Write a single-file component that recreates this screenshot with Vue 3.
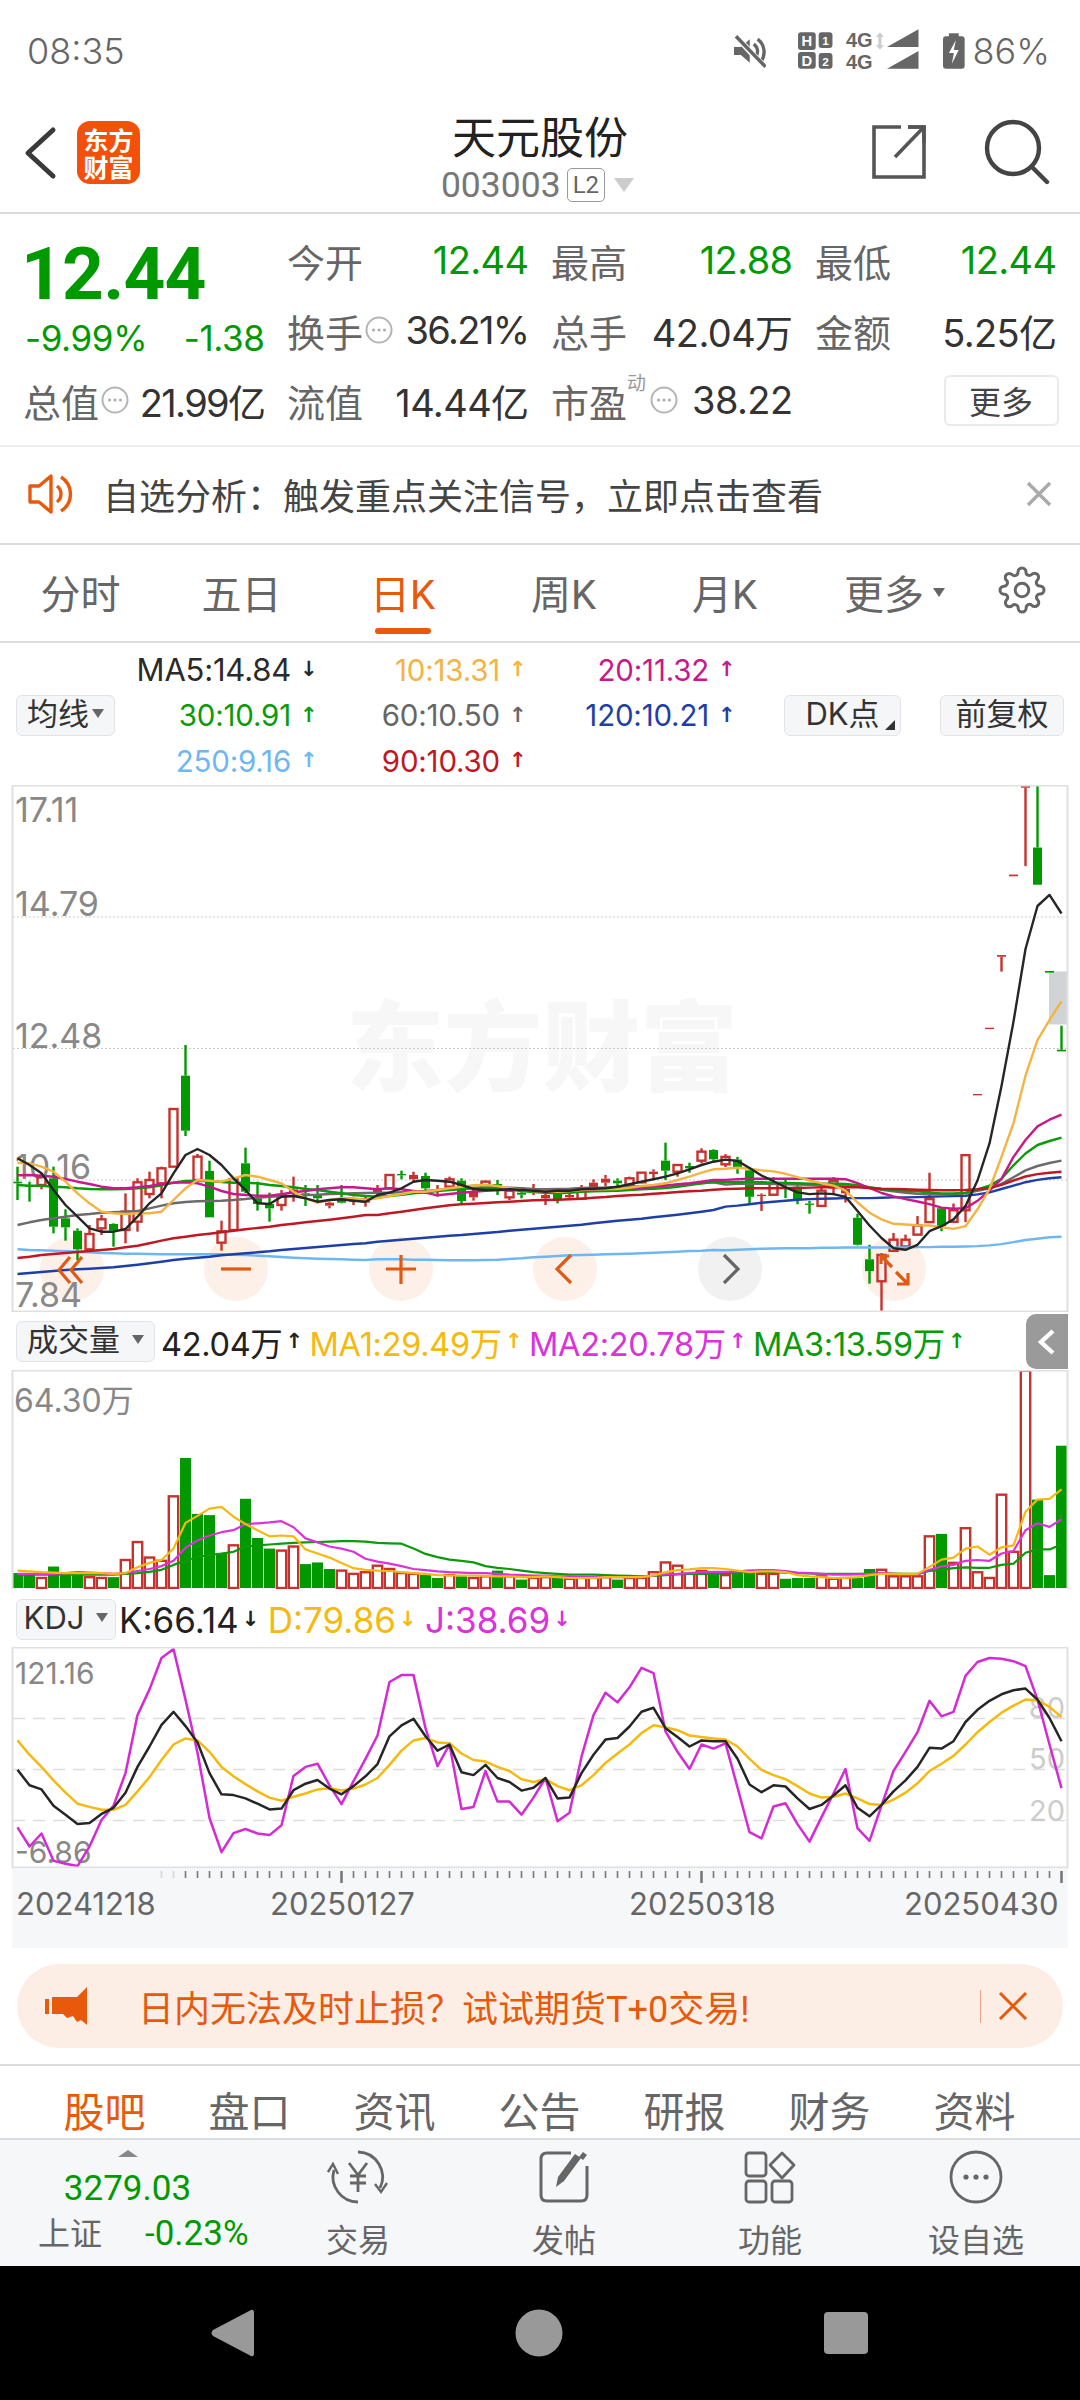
<script setup>
const cx = (i) => 17.5 + 12 * i
const conv = (list, base, scale) => list.map((v) => base + v / scale)
const rows = (list, base, scale) => list.map(([k, a, b, c, d]) => [k, base + a / scale, base + b / scale, base + c / scale, base + d / scale])

const candleData = [
  ...rows([
    ['g',410,455,460,510],['g',455,465,470,515],['r',430,440,465,478],['g',410,445,590,610],['g',538,565,592,632],
    ['g',595,602,658,690],['r',585,612,658,660],['r',555,568,595,615],['g',580,582,602,650],['r',490,545,600,640],
    ['r',445,457,575,605],['r',425,450,492,505],['r',410,415,460,505],['r',237,237,410,410],['g',45,137,302,318],
    ['r',372,380,450,450],['g',392,423,562,562],['r',572,604,638,662],['r',445,447,600,600],['g',353,400,485,490],
    ['g',455,505,522,542],['g',488,522,535,575],['r',480,495,525,542],['r',440,478,492,515],['g',465,490,495,528],
    ['g',465,495,505,520],['r',515,518,527,535],['g',465,510,518,520],['r',500,505,515,525],['r',500,505,518,530]
  ], 1030, 3),
  ...rows([
    ['r',195,205,222,225],['r',162,165,205,205],['g',152,162,166,178],['r',155,165,178,185],['g',158,168,205,215],
    ['r',195,210,215,230],['r',170,178,200,205],['g',175,182,243,250],['r',210,215,232,242],['r',182,185,205,210],
    ['g',180,192,210,225],['r',205,212,232,240],['g',210,218,224,235],['r',192,205,212,225],['r',215,225,235,255],
    ['g',210,220,240,250],['r',210,225,232,235],['r',195,205,236,238],['r',178,188,202,205],['r',165,176,188,200],
    ['g',175,182,190,200],['r',170,175,195,200],['r',158,158,187,190],['r',148,155,162,180],['g',68,122,152,180],
    ['r',132,135,155,170],['g',128,138,145,158],['r',85,95,122,130],['g',88,90,118,125]
  ], 1120, 3),
  ...rows([
    ['r',1092,1100,1122,1130],['g',1100,1108,1135,1150],['g',1130,1140,1218,1240],['r',1208,1212,1216,1260],['r',1160,1180,1212,1212],
    ['g',1168,1190,1195,1222],['g',1180,1188,1228,1240],['g',1230,1238,1242,1268],['r',1190,1200,1245,1245],['r',1160,1172,1190,1210],
    ['r',1190,1195,1208,1235],['g',1268,1280,1360,1362],['g',1360,1403,1438,1475],['r',1385,1390,1468,1558],['r',1325,1345,1378,1380],
    ['r',1330,1345,1365,1368],['r',1275,1303,1330,1330],['r',1147,1225,1293,1293],['g',1250,1252,1305,1320],['r',1238,1258,1292,1295],
    ['r',1095,1095,1258,1293],['r',914,914,918,918],['r',718,718,722,722],['r',503,503,508,552],['r',265,265,270,270],
    ['r',3,3,8,240],['g',0,185,295,295],['g',550,550,555,555],['g',712,783,788,788]
  ], 785, 2.958)
]

const candles = candleData.map(([k, hi, top, bot, lo], i) => ({
  i, x: cx(i), cls: k === 'r' ? 'up' : 'down', hi, top, bot, lo,
  solid: k === 'g' || bot - top < 6
}))

const lineSet = (a, b, c) => [...conv(a, 1030, 3), ...conv(b, 1120, 3), ...conv(c, 785, 2.958)]
const toPath = (ys) => ys.map((y, i) => `${cx(i).toFixed(1)},${y.toFixed(1)}`).join(' ')

const mainLines = [
  { c: '#6fb7f2', y: lineSet(
    [658,660,661,662,664,665,667,669,670,671,671,672,673,673,673,673,673,673,674,675,677,679,681,683,685,686,687,688,689,690],
    [418,418,418,419,419,420,421,421,421,420,419,417,415,412,410,408,406,405,404,403,402,401,400,398,397,395,393,392,390],
    [1376,1375,1373,1372,1371,1370,1370,1370,1369,1369,1368,1368,1368,1368,1368,1368,1367,1367,1366,1366,1365,1364,1362,1358,1352,1346,1342,1338,1336]) },
  { c: '#1f3fa8', y: lineSet(
    [732,729,726,723,720,718,716,714,712,708,704,700,695,690,686,683,680,676,673,670,667,664,660,657,654,651,648,645,642,640],
    [365,362,359,356,353,350,347,345,342,339,336,332,329,326,323,320,317,314,310,306,302,299,296,292,288,284,280,275,270],
    [1247,1244,1240,1236,1233,1230,1227,1225,1224,1223,1222,1222,1222,1221,1220,1220,1219,1218,1217,1216,1215,1211,1205,1195,1185,1175,1168,1163,1160]) },
  { c: '#6b6b6b', y: lineSet(
    [585,577,570,565,560,555,552,548,547,545,543,535,527,520,516,514,513,512,510,507,503,500,498,497,495,494,492,491,490,489],
    [218,218,217,215,213,210,208,206,204,202,202,203,205,207,208,207,206,204,203,203,202,200,199,198,196,195,193,190,187],
    [1182,1180,1180,1180,1180,1181,1182,1183,1183,1183,1184,1187,1192,1197,1202,1206,1209,1210,1210,1210,1207,1200,1193,1180,1160,1140,1127,1118,1111]) },
  { c: '#0a9a0a', y: lineSet(
    [465,467,467,470,472,475,477,478,478,477,475,472,466,458,453,452,453,456,458,458,460,465,468,472,477,480,485,490,495,498],
    [230,228,224,220,217,213,210,207,204,203,204,208,213,216,218,220,218,215,214,213,212,210,208,206,204,200,195,190,185],
    [1175,1175,1174,1175,1176,1177,1178,1179,1179,1179,1180,1184,1190,1195,1198,1200,1202,1205,1208,1208,1207,1196,1185,1165,1125,1090,1065,1053,1043]) },
  { c: '#c8198c', y: lineSet(
    [436,435,437,440,447,455,462,470,475,475,472,468,462,458,457,460,470,483,492,495,497,497,493,487,483,478,475,472,472,475],
    [208,205,208,213,218,226,222,218,215,212,210,210,210,212,215,212,212,210,208,206,205,205,203,200,197,193,190,185,180],
    [1168,1166,1165,1165,1165,1165,1165,1165,1165,1165,1166,1178,1192,1207,1217,1225,1232,1240,1250,1253,1252,1230,1200,1165,1100,1050,1010,990,975]) },
  { c: '#c01822', y: lineSet(
    [684,680,675,672,669,666,663,660,657,652,647,640,632,625,620,615,611,607,602,598,594,590,585,581,577,573,569,565,560,555],
    [285,280,275,270,265,260,256,253,251,249,247,245,243,241,240,239,238,236,233,231,228,226,224,221,219,216,214,212,209],
    [1195,1194,1193,1193,1193,1192,1192,1191,1190,1190,1190,1190,1192,1194,1195,1196,1197,1198,1199,1199,1198,1196,1192,1183,1170,1158,1151,1147,1144]) },
  { c: '#f5b342', y: lineSet(
    [398,400,410,425,455,490,520,545,550,552,550,550,545,510,475,450,452,455,445,435,440,450,460,485,505,518,510,505,505,510],
    [235,228,222,215,215,210,205,200,196,195,198,205,210,213,215,215,213,210,208,208,207,203,198,195,190,180,170,158,148],
    [1135,1132,1135,1140,1143,1150,1160,1170,1178,1185,1200,1235,1265,1285,1298,1300,1302,1303,1308,1313,1305,1255,1195,1100,1000,860,755,695,640]) },
  { c: '#262626', y: lineSet(
    [385,405,430,480,525,560,595,605,605,597,560,520,490,430,375,357,375,405,445,480,520,522,500,498,505,515,510,508,512,515],
    [225,218,205,185,180,182,185,195,207,210,210,208,210,212,215,212,212,208,206,205,200,193,185,178,170,160,148,135,125],
    [1108,1112,1133,1155,1172,1190,1205,1210,1208,1210,1218,1260,1303,1340,1370,1375,1360,1320,1305,1285,1245,1170,1060,890,700,485,358,325,380]) }
]
const mainPaths = mainLines.map((l) => ({ c: l.c, pts: toPath(l.y) }))

const circleXs = [
  { x: 72, gray: false }, { x: 236, gray: false }, { x: 401, gray: false },
  { x: 565, gray: false }, { x: 730, gray: true }, { x: 894, gray: false }
]
const priceLabels = [
  { t: '17.11', y: 822 }, { t: '14.79', y: 916 }, { t: '12.48', y: 1048 }, { t: '10.16', y: 1179 }, { t: '7.84', y: 1307 }
]
const gridYs = [917, 1048.5, 1180]

const volSpec = 'g620 g620 r632 g604 g620 g622 r630 r632 g630 r588 r544 r582 r590 r432 g338 g475 g478 g572 r552 g438 g534 g560 r565 r555 g598 g594 g610 r614 r622 r618 r602 r610 r620 r622 g624 g632 r625 g628 r632 r628 g614 r628 g636 r632 r630 g632 r634 r632 r632 r630 g636 r632 r632 r618 r594 r602 r622 r615 g620 r625 g620 g612 r622 r622 g634 g632 g632 r628 r634 r632 g632 g610 r612 r628 r628 r628 r530 g524 r595 r510 r618 r632 r428 r568 r124 g440 g625 g308'
const volBars = volSpec.split(' ').map((s, i) => {
  const top = 1320 + Number(s.slice(1)) / 2.45
  return { i, x: cx(i), up: s[0] === 'r', top, h: 1588 - top }
})
const vol = (list) => toPath(list.map((v) => 1320 + v / 2.45))
const volLines = [
  { c: '#0a9a0a', pts: vol([624,624,624,624,624,624,624,624,624,622,620,617,612,600,590,580,576,572,568,555,552,550,548,546,545,544,543,542,542,543,546,547,548,560,573,581,587,590,594,603,607,610,614,618,620,622,624,624,624,625,626,627,628,627,625,623,622,622,622,620,619,618,618,618,619,620,621,622,622,622,622,621,620,621,622,622,615,612,608,606,607,607,600,597,570,562,562,550]) },
  { c: '#d933d9', pts: vol([622,622,622,622,620,618,619,620,622,620,615,610,603,590,558,540,528,520,515,500,498,496,493,508,535,545,555,560,568,585,592,597,603,610,613,616,618,619,620,620,622,624,625,626,626,628,628,630,630,630,630,630,629,626,623,622,620,618,617,617,616,614,613,613,615,619,620,622,624,624,623,622,620,622,624,624,612,604,600,590,588,590,572,566,515,498,507,488]) },
  { c: '#f5b90f', pts: vol([614,616,618,619,620,620,620,620,622,620,606,595,588,560,497,480,462,458,482,500,515,530,528,530,562,572,582,595,608,612,614,615,618,620,622,625,626,626,626,627,628,628,630,630,628,630,632,632,632,630,630,630,630,626,618,613,611,608,608,610,614,618,616,616,618,625,628,630,632,632,630,625,622,622,622,622,605,587,582,560,555,575,557,552,470,440,438,415]) }
]

const kdjLines = [
  { c: '#d42bd4', pts: vol([1243,1290,1258,1325,1332,1338,1290,1225,1190,1110,968,905,828,806,930,1060,1220,1304,1257,1247,1258,1262,1238,1117,1095,1087,1140,1186,1130,1075,1018,887,870,870,1000,1093,1040,1198,1193,1105,1180,1180,1212,1170,1122,1228,1207,1070,968,913,937,900,852,865,1008,1058,1100,1040,1050,1037,1145,1255,1270,1192,1184,1235,1278,1218,1160,1100,1245,1276,1190,1105,1058,1010,933,971,960,872,838,828,830,836,848,930,1040,1147]) },
  { c: '#f5b90f', pts: vol([1030,1065,1095,1128,1158,1185,1193,1200,1200,1188,1155,1120,1078,1040,1025,1030,1058,1095,1118,1137,1155,1170,1178,1168,1160,1150,1147,1153,1148,1138,1122,1090,1055,1030,1024,1035,1037,1062,1078,1082,1095,1105,1125,1132,1125,1142,1152,1140,1115,1085,1062,1040,1012,993,998,1005,1018,1022,1025,1028,1045,1075,1102,1115,1125,1142,1160,1170,1168,1160,1172,1186,1188,1175,1158,1135,1105,1087,1068,1040,1010,985,962,945,930,932,948,973]) },
  { c: '#262626', pts: vol([1102,1140,1150,1190,1212,1235,1232,1210,1195,1158,1095,1045,992,960,995,1035,1110,1162,1164,1172,1185,1199,1197,1152,1136,1127,1148,1162,1142,1118,1088,1020,993,977,1020,1055,1040,1108,1115,1090,1122,1132,1153,1146,1122,1172,1170,1110,1065,1028,1024,996,960,950,1000,1022,1045,1030,1032,1032,1075,1138,1157,1140,1143,1172,1198,1188,1165,1140,1195,1216,1188,1155,1128,1095,1048,1050,1032,985,955,933,917,907,903,930,975,1032]) }
]
const kdjDash = [1718.5, 1769.5, 1820.5]
const kdjRight = [{ t: '80', y: 1718 }, { t: '50', y: 1769 }, { t: '20', y: 1821 }]

const ticks = Array.from({ length: 76 }, (_, n) => {
  const i = n + 12
  return { i, x: cx(i), major: i === 27 || i === 57 || i === 87, faded: i < 14 }
})
const axisLabels = [
  { t: '20241218', x: 16 }, { t: '20250127', x: 270 }, { t: '20250318', x: 629 }, { t: '20250430', x: 904 }
]

const quoteRows = [
  [{ l: '今开', v: '12.44', green: true }, { l: '最高', v: '12.88', green: true }, { l: '最低', v: '12.44', green: true }],
  [{ l: '换手', v: '36.21%', dots: true, tight: true }, { l: '总手', v: '42.04万' }, { l: '金额', v: '5.25亿' }]
]

const legend = [
  { t: 'MA5:14.84', a: '↓', c: '#2a2a2a', col: 2, row: 1, big: true },
  { t: '10:13.31', a: '↑', c: '#f5b342', col: 3, row: 1 },
  { t: '20:11.32', a: '↑', c: '#c8198c', col: 4, row: 1 },
  { t: '30:10.91', a: '↑', c: '#0a9a0a', col: 2, row: 2 },
  { t: '60:10.50', a: '↑', c: '#666666', col: 3, row: 2 },
  { t: '120:10.21', a: '↑', c: '#1f3fa8', col: 4, row: 2 },
  { t: '250:9.16', a: '↑', c: '#6fb7f2', col: 2, row: 3 },
  { t: '90:10.30', a: '↑', c: '#c01822', col: 3, row: 3 }
]

const volLegend = [
  { t: '42.04万', a: '↑', c: '#222222' },
  { t: 'MA1:29.49万', a: '↑', c: '#f5b90f' },
  { t: 'MA2:20.78万', a: '↑', c: '#d933d9' },
  { t: 'MA3:13.59万', a: '↑', c: '#0a9a0a' }
]
const kdjLegend = [
  { t: 'K:66.14', a: '↓', c: '#222222' },
  { t: 'D:79.86', a: '↓', c: '#f5b90f' },
  { t: 'J:38.69', a: '↓', c: '#d933d9' }
]

const periodTabs = ['分时', '五日', '日K', '周K', '月K']
const infoTabs = ['股吧', '盘口', '资讯', '公告', '研报', '财务', '资料']
</script>

<template>
  <div class="phone">
    <div class="status">
      <span class="time">08:35</span>
      <div class="status-right">
        <svg width="34" height="36" viewBox="0 0 34 36" class="si-mute">
          <path d="M1 14 h7 l9 -8 v24 l-9 -8 h-7 z" fill="#666" />
          <path d="M21 11 a9 9 0 0 1 2 13 M25 6 a16 16 0 0 1 3 23" fill="none" stroke="#666" stroke-width="3.4" />
          <path d="M2 2 L32 34" stroke="#fff" stroke-width="6" />
          <path d="M3 3 L33 34" stroke="#666" stroke-width="3.6" />
        </svg>
        <svg width="36" height="38" viewBox="0 0 36 38" class="si-hd">
          <rect x="0" y="0" width="18" height="18" rx="3" fill="#666" />
          <rect x="21" y="0" width="14" height="16" rx="3" fill="#666" />
          <rect x="0" y="20" width="18" height="17" rx="3" fill="#666" />
          <rect x="21" y="21" width="14" height="16" rx="3" fill="#666" />
          <text x="9" y="14" class="si-t" font-size="15">H</text>
          <text x="28" y="13" class="si-t" font-size="12">1</text>
          <text x="9" y="34" class="si-t" font-size="15">D</text>
          <text x="28" y="34" class="si-t" font-size="12">2</text>
        </svg>
        <div class="net">
          <span>4G</span>
          <span>4G</span>
        </div>
        <svg width="12" height="18" viewBox="0 0 12 18" class="si-updown">
          <path d="M6 0 L10 5 H2 Z M6 18 L10 13 H2 Z" fill="#ccc" />
          <rect x="4.5" y="4" width="3" height="10" fill="#ccc" />
        </svg>
        <svg width="32" height="41" viewBox="0 0 32 41" class="si-signal">
          <path d="M32 0 V18 H0 Z M32 22 V40 H0 Z" fill="#666" />
        </svg>
        <svg width="22" height="36" viewBox="0 0 22 36" class="si-batt">
          <rect x="6" y="0" width="10" height="4" fill="#666" />
          <rect x="0" y="3" width="22" height="33" rx="3" fill="#666" />
          <path d="M13 7 L6 20 H11 L9 31 L16 17 H11 Z" fill="#fff" />
        </svg>
        <span class="pct">86%</span>
      </div>
    </div>

    <header class="head">
      <div class="head-left">
        <svg width="34" height="54" viewBox="0 0 34 54" class="back">
          <path d="M30 4 L5 27 L30 50" fill="none" stroke="#3a3a3a" stroke-width="5" stroke-linecap="round" stroke-linejoin="round" />
        </svg>
        <div class="logo"><span>东方</span><span>财富</span></div>
      </div>
      <div class="head-mid">
        <div class="title">天元股份</div>
        <div class="code">
          <span>003003</span><span class="l2">L2</span><i class="down-tri"></i>
        </div>
      </div>
      <div class="head-right">
        <svg width="56" height="56" viewBox="0 0 56 56">
          <path d="M30 3 H3 V53 H53 V3 H37" fill="none" stroke="#555" stroke-width="3.6" />
          <path d="M24 33 L52 4 M37 3 H53 V19" fill="none" stroke="#555" stroke-width="3.6" />
        </svg>
        <svg width="66" height="66" viewBox="0 0 66 66">
          <circle cx="29" cy="29" r="26" fill="none" stroke="#444" stroke-width="4.4" />
          <path d="M48 48 L63 63" stroke="#444" stroke-width="4.4" stroke-linecap="round" />
        </svg>
      </div>
    </header>

    <section class="quote">
      <div class="q-price">12.44</div>
      <template v-for="c in quoteRows[0]" :key="c.l">
        <div class="q-cell"><span class="q-l">{{ c.l }}</span><span class="q-v" :class="{ green: c.green }">{{ c.v }}</span></div>
      </template>
      <div class="q-change"><span>-9.99%</span><span>-1.38</span></div>
      <template v-for="c in quoteRows[1]" :key="c.l">
        <div class="q-cell">
          <span class="q-l">{{ c.l }}<svg v-if="c.dots" class="dots" width="28" height="28" viewBox="0 0 28 28"><circle cx="14" cy="14" r="12.5" fill="none" stroke="#b5b5b5" stroke-width="2" /><circle cx="8.5" cy="14" r="1.5" fill="#aaa" /><circle cx="14" cy="14" r="1.5" fill="#aaa" /><circle cx="19.5" cy="14" r="1.5" fill="#aaa" /></svg></span>
          <span class="q-v" :class="{ 'q-tight': c.tight }">{{ c.v }}</span>
        </div>
      </template>
      <div class="q-cell">
        <span class="q-l">总值<svg class="dots" width="28" height="28" viewBox="0 0 28 28"><circle cx="14" cy="14" r="12.5" fill="none" stroke="#b5b5b5" stroke-width="2" /><circle cx="8.5" cy="14" r="1.5" fill="#aaa" /><circle cx="14" cy="14" r="1.5" fill="#aaa" /><circle cx="19.5" cy="14" r="1.5" fill="#aaa" /></svg></span>
        <span class="q-v q-tight">21.99亿</span>
      </div>
      <div class="q-cell"><span class="q-l">流值</span><span class="q-v">14.44亿</span></div>
      <div class="q-cell">
        <span class="q-l q-pe">市盈<sup>动</sup><svg class="dots" width="28" height="28" viewBox="0 0 28 28"><circle cx="14" cy="14" r="12.5" fill="none" stroke="#b5b5b5" stroke-width="2" /><circle cx="8.5" cy="14" r="1.5" fill="#aaa" /><circle cx="14" cy="14" r="1.5" fill="#aaa" /><circle cx="19.5" cy="14" r="1.5" fill="#aaa" /></svg></span>
        <span class="q-v">38.22</span>
      </div>
      <div class="q-more"><button class="more-btn">更多</button></div>
    </section>

    <div class="notice">
      <svg width="48" height="42" viewBox="0 0 48 42">
        <path d="M2 13 H11 L23 3 V39 L11 29 H2 Z" fill="none" stroke="#e8590c" stroke-width="3.4" stroke-linejoin="round" />
        <path d="M29 13 a10 10 0 0 1 0 16" fill="none" stroke="#e8590c" stroke-width="3.4" />
        <path d="M33 4 a20 20 0 0 1 0 34" fill="none" stroke="#e8590c" stroke-width="3.4" />
      </svg>
      <span class="notice-t">自选分析：触发重点关注信号，立即点击查看</span>
      <svg class="notice-x" width="26" height="26" viewBox="0 0 26 26">
        <path d="M2 2 L24 24 M24 2 L2 24" stroke="#aaa" stroke-width="3.4" />
      </svg>
    </div>

    <nav class="periods">
      <div v-for="(t, n) in periodTabs" :key="t" class="period" :class="{ on: n === 2 }">{{ t }}</div>
      <div class="period more-tab">更多<i class="tri-more"></i></div>
      <svg class="gear" width="48" height="48" viewBox="0 0 24 24">
        <circle cx="12" cy="12" r="3.4" fill="none" stroke="#666" stroke-width="1.5" />
        <path d="M19.4 15a1.65 1.65 0 0 0 .33 1.82l.06.06a2 2 0 0 1 0 2.83 2 2 0 0 1-2.83 0l-.06-.06a1.65 1.65 0 0 0-1.82-.33 1.65 1.65 0 0 0-1 1.51V21a2 2 0 0 1-2 2 2 2 0 0 1-2-2v-.09A1.65 1.65 0 0 0 9 19.4a1.65 1.65 0 0 0-1.82.33l-.06.06a2 2 0 0 1-2.83 0 2 2 0 0 1 0-2.83l.06-.06a1.65 1.65 0 0 0 .33-1.82 1.65 1.65 0 0 0-1.51-1H3a2 2 0 0 1-2-2 2 2 0 0 1 2-2h.09A1.65 1.65 0 0 0 4.6 9a1.65 1.65 0 0 0-.33-1.82l-.06-.06a2 2 0 0 1 0-2.83 2 2 0 0 1 2.83 0l.06.06a1.65 1.65 0 0 0 1.82.33H9a1.65 1.65 0 0 0 1-1.51V3a2 2 0 0 1 2-2 2 2 0 0 1 2 2v.09a1.65 1.65 0 0 0 1 1.51 1.65 1.65 0 0 0 1.82-.33l.06-.06a2 2 0 0 1 2.83 0 2 2 0 0 1 0 2.83l-.06.06a1.65 1.65 0 0 0-.33 1.82V9a1.65 1.65 0 0 0 1.51 1H21a2 2 0 0 1 2 2 2 2 0 0 1-2 2h-.09a1.65 1.65 0 0 0-1.51 1z" fill="none" stroke="#666" stroke-width="1.5" stroke-linejoin="round" />
      </svg>
    </nav>

    <div class="legend">
      <div class="leg-btn ma-btn">均线<i class="tri-btn"></i></div>
      <div
        v-for="m in legend" :key="m.t" class="leg-item" :class="{ big: m.big }"
        :style="{ color: m.c, gridColumn: m.col, gridRow: m.row }"
      ><span>{{ m.t }}</span><span class="arrow">{{ m.a }}</span></div>
      <div class="leg-btn dk-btn">DK点<i class="corner"></i></div>
      <div class="leg-btn fq-btn">前复权</div>
    </div>

    <svg class="panel main" width="1080" height="527" viewBox="0 785 1080 527">
      <defs>
        <clipPath id="mainClip"><rect x="12" y="785" width="1056" height="527" /></clipPath>
      </defs>
      <text x="346" y="1083" class="watermark">东方财富</text>
      <line v-for="y in gridYs" :key="y" x1="13" x2="1067" :y1="y" :y2="y" class="grid-dot" />
      <circle v-for="c in circleXs" :key="c.x" :cx="c.x" cy="1269" r="32" :fill="c.gray ? '#f1f1f1' : '#fdf0e9'" />
      <text v-for="l in priceLabels" :key="l.t" x="15" :y="l.y" class="axis-t">{{ l.t }}</text>
      <rect x="1049" y="971.5" width="18" height="53" fill="#d1d4d7" />
      <g clip-path="url(#mainClip)">
        <g v-for="k in candles" :key="k.i" :class="k.cls">
          <line :x1="k.x" :x2="k.x" :y1="k.hi" :y2="k.top" class="wick" />
          <line :x1="k.x" :x2="k.x" :y1="k.bot" :y2="k.lo" class="wick" />
          <rect v-if="k.solid" :x="k.x - 4.5" :y="k.top" width="9" :height="k.bot - k.top" class="solid" />
          <rect v-else :x="k.x - 4" :y="k.top" width="8" :height="k.bot - k.top" class="hollow" />
        </g>
        <polyline v-for="l in mainPaths" :key="l.c" :points="l.pts" fill="none" :stroke="l.c" stroke-width="2.4" stroke-linejoin="round" />
      </g>
      <g class="ctrl">
        <path d="M70 1257 L59 1270 L70 1283 M82 1257 L71 1270 L82 1283" />
        <path d="M221 1269 H251" />
        <path d="M386 1269 H416 M401 1255 V1284" />
        <path d="M571 1255 L557 1269 L571 1283" />
        <path d="M724 1255 L738 1269 L724 1283" class="ctrl-gray" />
        <path d="M892 1267 L881 1256 M881 1264 V1256 H889 M896 1272 L908 1284 M908 1273 V1284 H897" />
      </g>
      <rect x="12.5" y="785.5" width="1055" height="526" class="frame" />
    </svg>

    <div class="sub-head">
      <div class="leg-btn sub-btn vol-btn">成交量<i class="tri-btn tri-gap"></i></div>
      <div v-for="m in volLegend" :key="m.t" class="sub-item" :style="{ color: m.c }"><span>{{ m.t }}</span><span class="arrow">{{ m.a }}</span></div>
      <div class="handle">
        <svg width="20" height="28" viewBox="0 0 20 28"><path d="M16 3 L4 14 L16 25" fill="none" stroke="#fff" stroke-width="4.4" /></svg>
      </div>
    </div>

    <svg class="panel" width="1080" height="219" viewBox="0 1370 1080 219">
      <text x="14" y="1412" class="axis-t t32">64.30万</text>
      <g v-for="b in volBars" :key="b.i">
        <rect v-if="b.up" :x="b.x - 4.7" :y="b.top" width="9.4" :height="b.h" class="vol-up" />
        <rect v-else :x="Math.max(b.x - 5.5, 12.5)" :y="b.top" width="11" :height="b.h" class="vol-down" />
      </g>
      <polyline v-for="l in volLines" :key="l.c" :points="l.pts" fill="none" :stroke="l.c" stroke-width="2.2" stroke-linejoin="round" />
      <path d="M12.5 1589 V1370.5 H1067.5 V1589" class="frame" />
    </svg>

    <div class="sub-head kdj-head">
      <div class="leg-btn sub-btn kdj-btn">KDJ<i class="tri-btn tri-gap"></i></div>
      <div v-for="m in kdjLegend" :key="m.t" class="sub-item kdj-item" :style="{ color: m.c }"><span>{{ m.t }}</span><span class="arrow">{{ m.a }}</span></div>
    </div>

    <svg class="panel" width="1080" height="221" viewBox="0 1647 1080 221">
      <line v-for="y in kdjDash" :key="y" x1="13" x2="1067" :y1="y" :y2="y" class="grid-dash" />
      <text x="15" y="1684" class="axis-t t30">121.16</text>
      <text x="15" y="1863" class="axis-t t30">-6.86</text>
      <text v-for="r in kdjRight" :key="r.t" x="1065" :y="r.y" class="axis-r">{{ r.t }}</text>
      <polyline v-for="l in kdjLines" :key="l.c" :points="l.pts" fill="none" :stroke="l.c" stroke-width="2.5" stroke-linejoin="round" />
      <rect x="12.5" y="1647.5" width="1055" height="220" class="frame" />
    </svg>

    <svg class="panel" width="1080" height="80" viewBox="0 1868 1080 80">
      <rect x="12" y="1868" width="1056" height="80" fill="#f6f7f9" />
      <line
        v-for="t in ticks" :key="t.i" :x1="t.x" :x2="t.x" y1="1871" :y2="t.major ? 1883 : 1878"
        stroke="#777" :stroke-width="t.major ? 2.6 : 1.6" :opacity="t.faded ? 0.25 : 1"
      />
      <text v-for="a in axisLabels" :key="a.t" :x="a.x" y="1915" class="time-t">{{ a.t }}</text>
    </svg>

    <div class="banner-wrap">
      <div class="banner">
        <svg width="42" height="38" viewBox="0 0 42 38">
          <rect x="0" y="12" width="4" height="15" fill="#e8590c" />
          <path d="M7 10 L32 10 L42 0 V38 L36 33 L32 35 L28 29 L22 31 L18 27 L7 27 Z" fill="#e8590c" />
        </svg>
        <span class="banner-t">日内无法及时止损？试试期货T+0交易!</span>
        <i class="banner-sep"></i>
        <svg width="30" height="28" viewBox="0 0 30 28">
          <path d="M2 1 L28 27 M28 1 L2 27" stroke="#e8590c" stroke-width="3" />
        </svg>
      </div>
    </div>

    <nav class="info-tabs">
      <span v-for="(t, n) in infoTabs" :key="t" :class="{ on: n === 0 }">{{ t }}</span>
    </nav>

    <footer class="bottom">
      <div class="index">
        <i class="idx-tri"></i>
        <div class="idx-val">3279.03</div>
        <div class="idx-row"><span class="idx-name">上证</span><span class="idx-pct">-0.23%</span></div>
      </div>
      <div class="tool">
        <svg width="62" height="54" viewBox="0 0 62 54">
          <path d="M31 2 a25 25 0 0 1 22 36" fill="none" stroke="#666" stroke-width="2.8" />
          <path d="M31 52 a25 25 0 0 1 -24 -32" fill="none" stroke="#666" stroke-width="2.8" />
          <path d="M1 22 L6 14 L11 24 M48 34 L54 42 L60 33" fill="none" stroke="#666" stroke-width="2.4" />
          <path d="M22 13 L31 25 L40 13 M31 25 V42 M23 26 H39 M23 33 H39" fill="none" stroke="#666" stroke-width="2.8" />
        </svg>
        <span>交易</span>
      </div>
      <div class="tool">
        <svg width="54" height="54" viewBox="0 0 54 54">
          <path d="M34 3 H10 Q4 3 4 9 V45 Q4 51 10 51 H44 Q50 51 50 45 V16" fill="none" stroke="#666" stroke-width="3" />
          <path d="M19 37 L21 27 L38 4 L44 8 L27 31 Z" fill="#666" />
          <path d="M46 2 L50 5 L46 10 L42 7 Z" fill="#666" />
        </svg>
        <span>发帖</span>
      </div>
      <div class="tool">
        <svg width="52" height="54" viewBox="0 0 52 54">
          <rect x="2" y="3" width="20" height="23" rx="3" fill="none" stroke="#666" stroke-width="2.8" />
          <path d="M38 3 L50 15 L38 28 L26 15 Z" fill="none" stroke="#666" stroke-width="2.8" stroke-linejoin="round" />
          <rect x="2" y="31" width="20" height="21" rx="3" fill="none" stroke="#666" stroke-width="2.8" />
          <rect x="28" y="31" width="20" height="21" rx="3" fill="none" stroke="#666" stroke-width="2.8" />
        </svg>
        <span>功能</span>
      </div>
      <div class="tool">
        <svg width="54" height="54" viewBox="0 0 54 54">
          <circle cx="27" cy="27" r="25" fill="none" stroke="#666" stroke-width="2.8" />
          <circle cx="17" cy="27" r="2.6" fill="#666" />
          <circle cx="27" cy="27" r="2.6" fill="#666" />
          <circle cx="37" cy="27" r="2.6" fill="#666" />
        </svg>
        <span>设自选</span>
      </div>
    </footer>

    <div class="navbar">
      <svg width="44" height="48" viewBox="0 0 44 48"><path d="M41 1 Q44 0 44 4 V44 Q44 48 41 47 L3 27 Q0 24 3 21 Z" fill="#999" /></svg>
      <svg width="48" height="48" viewBox="0 0 48 48"><circle cx="24" cy="24" r="23.5" fill="#999" /></svg>
      <svg width="44" height="42" viewBox="0 0 44 42"><rect width="44" height="42" rx="4" fill="#999" /></svg>
    </div>
  </div>
</template>

<style>
html, body { margin: 0; background: #fff; }
</style>

<style scoped>
.phone {
  width: 1080px;
  height: 2400px;
  overflow: hidden;
  background: #fff;
  font-family: Roboto, "Noto Sans CJK SC", sans-serif;
  color: #222;
}
.status {
  height: 95px;
  box-sizing: border-box;
  padding: 28px 30px 0 27px;
  display: flex;
  justify-content: space-between;
  align-items: flex-start;
  color: #666;
}
.time { font-family: Inter, sans-serif; font-weight: 300; font-size: 36px; line-height: 46px; }
.status-right { display: flex; align-items: flex-start; position: relative; width: 317px; height: 44px; }
.si-mute { margin: 5px 0 0 0; }
.si-hd { margin: 4px 0 0 32px; }
.si-t { fill: #fff; text-anchor: middle; font-family: "Liberation Sans", sans-serif; font-weight: 700; }
.net { display: flex; flex-direction: column; margin: 1px 0 0 12px; font: 700 20px/22px "Liberation Sans", sans-serif; color: #666; }
.si-updown { margin: 4px 0 0 1px; }
.si-signal { margin: 1px 0 0 2px; }
.si-batt { margin: 5px 0 0 24px; }
.pct { font-family: Inter, sans-serif; font-weight: 300; font-size: 36px; line-height: 46px; margin-left: 8px; }

.head {
  height: 119px;
  box-sizing: border-box;
  border-bottom: 2px solid #dcdcdc;
  display: grid;
  grid-template-columns: 1fr auto 1fr;
  align-items: start;
}
.head-left { display: flex; align-items: center; padding: 26px 0 0 23px; gap: 20px; }
.logo {
  width: 63px; height: 63px; border-radius: 13px; background: #f4500a; color: #fff;
  display: flex; flex-direction: column; align-items: center; justify-content: center;
  font-size: 25px; line-height: 27px; font-weight: 700; font-family: "Noto Sans CJK SC", sans-serif;
}
.head-mid { display: flex; flex-direction: column; align-items: center; padding-top: 14px; }
.title { font-size: 44px; line-height: 52px; color: #222; font-family: "Noto Sans CJK SC", sans-serif; }
.code { display: flex; align-items: center; margin-top: 5px; font-size: 35.5px; line-height: 38px; color: #777; margin-left: -5px; }
.l2 {
  border: 1.5px solid #999; border-radius: 5px; font-size: 24px; line-height: 32px;
  padding: 0 5px; margin-left: 6px; color: #666;
}
.down-tri {
  width: 0; height: 0; margin-left: 9px;
  border-left: 10px solid transparent; border-right: 10px solid transparent; border-top: 14px solid #ccc;
}
.head-right { display: flex; justify-content: flex-end; align-items: center; padding: 24px 30px 0 0; gap: 57px; }

.quote {
  height: 233px;
  box-sizing: border-box;
  border-bottom: 2px solid #eee;
  padding: 11px 24px 0 25px;
  display: grid;
  grid-template-columns: repeat(4, 239.5px);
  column-gap: 24.5px;
  grid-template-rows: repeat(3, 70px);
}
.q-price {
  font-size: 73px; font-weight: 700; color: #009a00; line-height: 70px;
  margin: 14px 0 0 -4px; letter-spacing: -0.8px; white-space: nowrap;
}
.q-cell { display: flex; justify-content: space-between; align-items: center; white-space: nowrap; }
.q-l { display: flex; align-items: center; font-size: 38px; color: #666; margin-left: -2px; }
.q-v { font-family: Inter, "Noto Sans CJK SC", sans-serif; font-size: 38px; letter-spacing: -0.6px; color: #333; }
.q-tight { letter-spacing: -1.6px; }
.q-v.green { color: #009a00; }
.dots { margin-left: 2px; }
.q-pe { position: relative; }
.q-pe sup { font-size: 19px; line-height: 1; align-self: flex-start; margin-top: 1px; margin-right: 2px; color: #999; }
.q-change {
  display: flex; justify-content: space-between; align-items: flex-end; padding-bottom: 6px;
  font-family: Inter, sans-serif; font-size: 35px; letter-spacing: -0.4px; color: #009a00; white-space: nowrap;
}
.q-more { display: flex; justify-content: flex-end; align-items: center; margin-right: -2px; }
.more-btn {
  width: 115px; height: 51px; padding: 0; background: #fff; border: 2px solid #eaeaea; border-radius: 6px;
  font: 400 32px/1 "Noto Sans CJK SC", sans-serif; color: #444;
}

.notice {
  height: 98px;
  box-sizing: border-box;
  border-bottom: 2px solid #dcdcdc;
  display: flex;
  align-items: center;
  padding: 0 28px 2px 28px;
}
.notice-t { font-size: 36px; color: #444; margin-left: 27px; flex: 1; white-space: nowrap; }

.periods {
  height: 98px;
  box-sizing: border-box;
  border-bottom: 2px solid #dcdcdc;
  display: flex;
  align-items: center;
}
.period {
  width: 161px; height: 96px; position: relative; flex: none;
  display: flex; align-items: center; justify-content: center;
  font-size: 40px; color: #666; padding-bottom: 2px; box-sizing: border-box;
}
.more-tab { padding-left: 18px; }
.period.on { color: #e8590c; }
.period.on::after {
  content: ""; position: absolute; left: 53px; width: 56px; height: 6px; bottom: 7px; border-radius: 3px; background: #e8590c;
}
.tri-more {
  width: 0; height: 0; margin-left: 9px;
  border-left: 6px solid transparent; border-right: 6px solid transparent; border-top: 9px solid #666;
}
.gear { margin-left: 32px; margin-bottom: 6px; }

.legend {
  height: 142px;
  box-sizing: border-box;
  padding: 4px 0 0 16px;
  display: grid;
  grid-template-columns: 122px 177px 209px 209px 51px 117px 39px 124px;
  grid-template-rows: repeat(3, 45.5px);
  font-family: Inter, "Noto Sans CJK SC", sans-serif;
}
.leg-item {
  display: flex; justify-content: flex-end; align-items: center; white-space: nowrap;
  font-size: 29.5px; letter-spacing: -0.2px;
}
.leg-item.big { font-size: 31px; }
.arrow { font: 700 21px/1 "DejaVu Sans", sans-serif; margin-left: 9px; width: 15px; text-align: center; }
.leg-btn {
  height: 41px; box-sizing: border-box; align-self: center;
  border: 1.5px solid #e2e3e6; border-radius: 6px; background: #f5f6f8;
  display: flex; align-items: center; justify-content: center; color: #333;
  font-size: 31px; line-height: 1; padding-bottom: 4px; font-family: Inter, "Noto Sans CJK SC", sans-serif; white-space: nowrap;
}
.ma-btn { grid-column: 1; grid-row: 2; width: 99px; }
.dk-btn { grid-column: 6; grid-row: 2; position: relative; }
.fq-btn { grid-column: 8; grid-row: 2; }
.tri-btn {
  width: 0; height: 0; margin-left: 3px;
  border-left: 6.5px solid transparent; border-right: 6.5px solid transparent; border-top: 9px solid #666;
}
.tri-gap { margin-left: 12px; }
.corner {
  position: absolute; right: 5px; bottom: 5px; width: 0; height: 0;
  border-left: 10px solid transparent; border-bottom: 10px solid #333;
}

.panel { display: block; }
.watermark { font: 900 98px "Noto Sans CJK SC", sans-serif; fill: #f7f7f7; }
.grid-dot { stroke: #ccc; stroke-width: 1; stroke-dasharray: 2 2; }
.grid-dash { stroke: #ddd; stroke-width: 1.6; stroke-dasharray: 12 8; }
.axis-t { font: 400 34px Inter, "Noto Sans CJK SC", sans-serif; fill: #888; }
.t30 { font-size: 30px; }
.t32 { font-size: 32px; }
.axis-r { font: 400 29px Inter, sans-serif; fill: #ccc; text-anchor: end; }
.time-t { font: 400 31px Inter, sans-serif; fill: #666; }
.frame { fill: none; stroke: #e0e0e0; stroke-width: 2; }
.up .wick { stroke: #c8322e; stroke-width: 2.4; }
.down .wick { stroke: #009a00; stroke-width: 2.4; }
.up .solid { fill: #c8322e; }
.down .solid { fill: #009a00; }
.up .hollow { fill: none; stroke: #c8322e; stroke-width: 2.4; }
.vol-up { fill: none; stroke: #c8322e; stroke-width: 2.4; }
.vol-down { fill: #009a00; }
.ctrl path { fill: none; stroke: #e05a14; stroke-width: 3.2; }
.ctrl .ctrl-gray { stroke: #666; }

.sub-head {
  height: 58px;
  box-sizing: border-box;
  position: relative;
  display: flex;
  align-items: flex-start;
  padding: 9px 0 0 16px;
  font-family: Inter, "Noto Sans CJK SC", sans-serif;
}
.sub-btn { width: 139px; align-self: auto; margin-right: 6px; }
.kdj-btn { width: 100px; margin-right: 3px; }
.kdj-head { padding-top: 10px; }
.sub-item {
  display: flex; align-items: center; height: 41px; font-size: 32.5px; letter-spacing: -0.3px;
  white-space: nowrap; margin-right: 9px;
}
.kdj-item { font-size: 35px; letter-spacing: 0; margin-right: 11px; }
.sub-item .arrow { margin-left: 3px; }
.handle {
  position: absolute; right: 12px; top: 2px; width: 42px; height: 55px;
  background: #9a9a9a; border-radius: 10px 0 0 10px;
  display: flex; align-items: center; justify-content: center;
}

.banner-wrap { height: 116px; box-sizing: border-box; padding: 16px 17px; }
.banner {
  height: 84px; border-radius: 42px; background: #fdeee5;
  display: flex; align-items: center; padding: 0 35px 0 28px; box-sizing: border-box;
}
.banner-t { font-size: 36px; color: #e8590c; margin-left: 51px; flex: 1; white-space: nowrap; }
.banner-sep { width: 1px; height: 33px; background: #e8a488; margin-right: 17px; }

.info-tabs {
  height: 76px;
  box-sizing: border-box;
  border-top: 2px solid #dcdcdc;
  border-bottom: 2px solid #dcdcdc;
  padding: 0 10px 0 32px;
  display: grid;
  grid-template-columns: repeat(7, 145px);
  align-items: center;
  justify-items: center;
  font-size: 41px;
  color: #666;
}
.info-tabs span { padding-top: 23px; line-height: 1; white-space: nowrap; }
.info-tabs .on { color: #e8590c; }

.bottom {
  height: 126px;
  background: #f6f7f9;
  display: grid;
  grid-template-columns: 255px repeat(4, 206px);
}
.index { position: relative; display: flex; flex-direction: column; align-items: center; }
.idx-tri {
  width: 0; height: 0; margin-top: 10px; margin-left: 1px;
  border-left: 10px solid transparent; border-right: 10px solid transparent; border-bottom: 7px solid #888;
}
.idx-val { font-size: 35px; line-height: 42px; color: #009a00; margin-top: 11px; }
.idx-row { display: flex; align-items: center; gap: 43px; margin-top: 3px; align-self: flex-start; padding-left: 38px; white-space: nowrap; }
.idx-name { font-size: 32px; color: #666; line-height: 42px; }
.idx-pct { font-size: 35px; color: #009a00; line-height: 42px; }
.tool { display: flex; flex-direction: column; align-items: center; padding-top: 10px; }
.tool span { font-size: 32px; color: #666; line-height: 40px; margin-top: 17px; white-space: nowrap; }

.navbar {
  height: 134px;
  background: #000;
  display: flex;
  align-items: center;
  padding: 0 212px 0 210px;
  justify-content: space-between;
}
</style>
